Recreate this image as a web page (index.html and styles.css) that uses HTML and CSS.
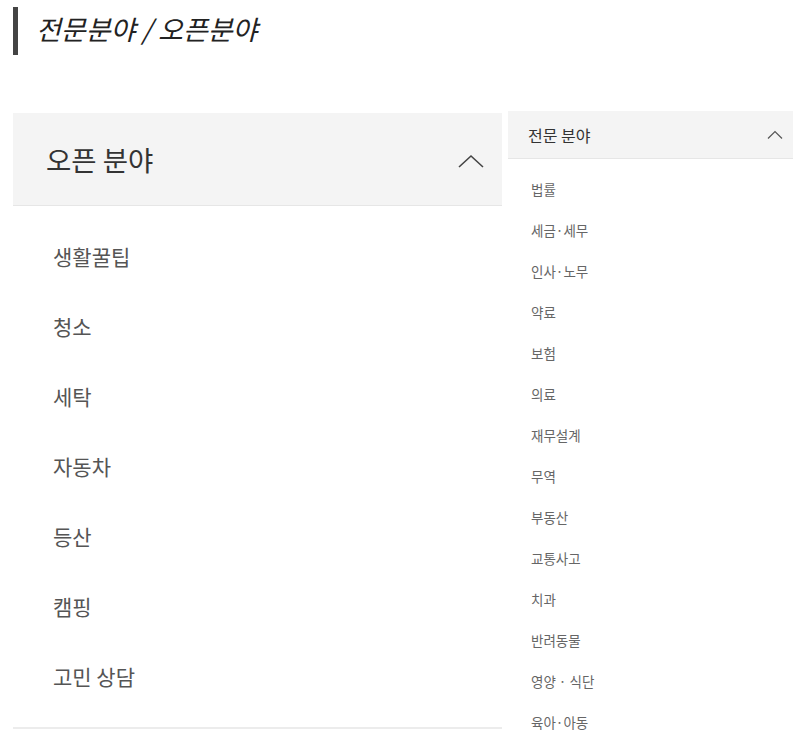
FILE: index.html
```html
<!DOCTYPE html>
<html>
<head>
  <title>전문분야 / 오픈분야</title>
  <link rel="stylesheet" href="styles.css">
</head>
<body>
  <h2 class="page-title">전문분야 / 오픈분야</h2>

  <div class="panels">
    <div class="panel open-panel">
      <div class="panel-head">
        <span>오픈 분야</span>
        <svg class="chevron" width="26" height="14" viewBox="0 0 26 14">
          <polyline points="1,13 13,2 25,13" fill="none" stroke="#444" stroke-width="1.6"/>
        </svg>
      </div>
      <ul class="panel-list">
        <li>생활꿀팁</li>
        <li>청소</li>
        <li>세탁</li>
        <li>자동차</li>
        <li>등산</li>
        <li>캠핑</li>
        <li>고민 상담</li>
      </ul>
    </div>

    <div class="panel expert-panel">
      <div class="panel-head">
        <span>전문 분야</span>
        <svg class="chevron" width="16" height="9" viewBox="0 0 16 9">
          <polyline points="1,8.5 8,1.5 15,8.5" fill="none" stroke="#555" stroke-width="1.2"/>
        </svg>
      </div>
      <ul class="panel-list">
        <li>법률</li>
        <li>세금·세무</li>
        <li>인사·노무</li>
        <li>약료</li>
        <li>보험</li>
        <li>의료</li>
        <li>재무설계</li>
        <li>무역</li>
        <li>부동산</li>
        <li>교통사고</li>
        <li>치과</li>
        <li>반려동물</li>
        <li>영양 · 식단</li>
        <li>육아·아동</li>
      </ul>
    </div>
  </div>
</body>
</html>
```

FILE: styles.css
```css
body {
  font-family: "Noto Sans CJK KR", "Noto Sans", sans-serif;
  background-color: #fff;
  color: #333;
  margin: 0;
  padding: 7px 12px 0 13px;
}

.page-title {
  margin: 0;
  border-left: 5px solid #444;
  padding-left: 18px;
  height: 48px;
  line-height: 44px;
  font-size: 27px;
  font-weight: normal;
  font-style: italic;
  color: #222;
}

.panels {
  display: flex;
  align-items: flex-start;
  gap: 6px;
  margin-top: 58px;
}

.panel-list {
  list-style: none;
  margin: 0;
  padding: 0;
}

/* left column */
.open-panel {
  width: 489px;
  border-bottom: 2px solid #ececec;
}

.open-panel .panel-head {
  display: flex;
  justify-content: space-between;
  align-items: center;
  height: 92px;
  padding: 0 18px 0 33px;
  background-color: #f4f4f4;
  border-bottom: 1px solid #e6e6e6;
  font-size: 27.5px;
  color: #333;
}

.open-panel .panel-head .chevron {
  margin-top: 4px;
}

.open-panel .panel-list {
  padding: 15px 0 16px 40px;
}

.open-panel .panel-list li {
  height: 70px;
  line-height: 70px;
  font-size: 21px;
  color: #555;
}

/* right column */
.expert-panel {
  width: 285px;
  margin-top: -2px;
}

.expert-panel .panel-head {
  display: flex;
  justify-content: space-between;
  align-items: center;
  height: 47px;
  padding: 0 10px 0 20px;
  background-color: #f4f4f4;
  border-bottom: 1px solid #e6e6e6;
  font-size: 16px;
  color: #333;
}

.expert-panel .panel-list {
  padding: 10px 0 0 23px;
}

.expert-panel .panel-list li {
  height: 41px;
  line-height: 41px;
  font-size: 13.5px;
  color: #666;
}
```
